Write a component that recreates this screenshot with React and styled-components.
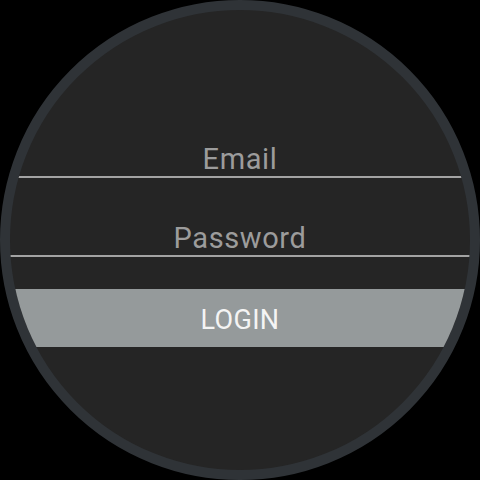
import React from "react";
import styled, { createGlobalStyle } from "styled-components";

const Global = createGlobalStyle`
  html, body { margin: 0; padding: 0; background: #000; }
  body { width: 480px; height: 480px; overflow: hidden; font-family: Roboto, "Noto Sans", sans-serif; }
`;

const Watch = styled.div`
  box-sizing: border-box;
  width: 480px;
  height: 480px;
  border-radius: 50%;
  border: 10px solid #2f3337;
  background: #252525;
  overflow: hidden;
  display: flex;
  flex-direction: column;
  padding-top: 133px;
`;

const Field = styled.div`
  margin-top: ${(p) => p.$gap || 0}px;
  border-bottom: 2px solid #a3a3a3;
  text-align: center;
  font-size: 29px;
  line-height: 33px;
  color: #9c9c9c;
  letter-spacing: 0.6px;
`;

const Button = styled.div`
  box-sizing: border-box;
  margin-top: 32px;
  height: 58px;
  padding-top: 3px;
  background: #959a9b;
  color: #f4f4f4;
  font-size: 27px;
  display: flex;
  align-items: center;
  justify-content: center;
  letter-spacing: 0.3px;
`;

export default function App() {
  return (
    <>
      <Global />
      <Watch>
        <Field>Email</Field>
        <Field $gap={44}>Password</Field>
        <Button>LOGIN</Button>
      </Watch>
    </>
  );
}
